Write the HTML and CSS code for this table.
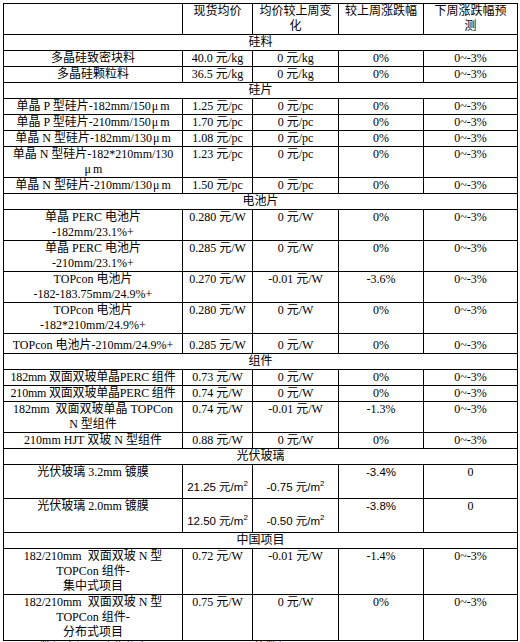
FILE: index.html
```html
<!DOCTYPE html>
<html lang="zh-CN">
<head>
<meta charset="utf-8">
<title>光伏产业链价格</title>
<link rel="stylesheet" href="styles.css">
</head>
<body>
<div class="cut-title">表1 光伏产业链主要产品价格周度变化</div>
<table class="price-table">
  <colgroup>
    <col class="c1"><col class="c2"><col class="c3"><col class="c4"><col class="c5">
  </colgroup>
  <tr class="r2">
    <td></td><td>现货均价</td><td>均价较上周变<br>化</td><td>较上周涨跌幅</td><td>下周涨跌幅预<br>测</td>
  </tr>
  <tr><td colspan="5" class="section">硅料</td></tr>
  <tr><td>多晶硅致密块料</td><td>40.0 元/kg</td><td>0 元/kg</td><td>0%</td><td>0~-3%</td></tr>
  <tr><td>多晶硅颗粒料</td><td>36.5 元/kg</td><td>0 元/kg</td><td>0%</td><td>0~-3%</td></tr>
  <tr><td colspan="5" class="section">硅片</td></tr>
  <tr><td>单晶 P 型硅片-182mm/150<span class="mu">μ</span>m</td><td>1.25 元/pc</td><td>0 元/pc</td><td>0%</td><td>0~-3%</td></tr>
  <tr><td>单晶 P 型硅片-210mm/150<span class="mu">μ</span>m</td><td>1.70 元/pc</td><td>0 元/pc</td><td>0%</td><td>0~-3%</td></tr>
  <tr><td>单晶 N 型硅片-182mm/130<span class="mu">μ</span>m</td><td>1.08 元/pc</td><td>0 元/pc</td><td>0%</td><td>0~-3%</td></tr>
  <tr><td>单晶 N 型硅片-182*210mm/130<br><span class="mu">μ</span>m</td><td>1.23 元/pc</td><td>0 元/pc</td><td>0%</td><td>0~-3%</td></tr>
  <tr><td>单晶 N 型硅片-210mm/130<span class="mu">μ</span>m</td><td>1.50 元/pc</td><td>0 元/pc</td><td>0%</td><td>0~-3%</td></tr>
  <tr><td colspan="5" class="section">电池片</td></tr>
  <tr><td>单晶 PERC 电池片<br>-182mm/23.1%+</td><td>0.280 元/W</td><td>0 元/W</td><td>0%</td><td>0~-3%</td></tr>
  <tr><td>单晶 PERC 电池片<br>-210mm/23.1%+</td><td>0.285 元/W</td><td>0 元/W</td><td>0%</td><td>0~-3%</td></tr>
  <tr><td>TOPcon 电池片<br>-182-183.75mm/24.9%+</td><td>0.270 元/W</td><td>-0.01 元/W</td><td>-3.6%</td><td>0~-3%</td></tr>
  <tr><td>TOPcon 电池片<br>-182*210mm/24.9%+</td><td>0.280 元/W</td><td>0 元/W</td><td>0%</td><td>0~-3%</td></tr>
  <tr class="tall"><td>TOPcon 电池片-210mm/24.9%+</td><td>0.285 元/W</td><td>0 元/W</td><td>0%</td><td>0~-3%</td></tr>
  <tr><td colspan="5" class="section">组件</td></tr>
  <tr><td class="tight">182mm 双面双玻单晶PERC 组件</td><td>0.73 元/W</td><td>0 元/W</td><td>0%</td><td>0~-3%</td></tr>
  <tr><td class="tight">210mm 双面双玻单晶PERC 组件</td><td>0.74 元/W</td><td>0 元/W</td><td>0%</td><td>0~-3%</td></tr>
  <tr><td>182mm&nbsp; 双面双玻单晶 TOPCon<br>N 型组件</td><td>0.74 元/W</td><td>-0.01 元/W</td><td>-1.3%</td><td>0~-3%</td></tr>
  <tr><td>210mm HJT 双玻 N 型组件</td><td>0.88 元/W</td><td>0 元/W</td><td>0%</td><td>0~-3%</td></tr>
  <tr><td colspan="5" class="section">光伏玻璃</td></tr>
  <tr class="glass"><td>光伏玻璃 3.2mm 镀膜</td><td class="low sans">21.25 元/m<sup>2</sup></td><td class="low sans">-0.75 元/m<sup>2</sup></td><td class="sans">-3.4%</td><td>0</td></tr>
  <tr class="glass"><td>光伏玻璃 2.0mm 镀膜</td><td class="low sans">12.50 元/m<sup>2</sup></td><td class="low sans">-0.50 元/m<sup>2</sup></td><td class="sans">-3.8%</td><td>0</td></tr>
  <tr><td colspan="5" class="section">中国项目</td></tr>
  <tr><td>182/210mm&nbsp; 双面双玻 N 型<br>TOPCon 组件-<br>集中式项目</td><td>0.72 元/W</td><td>-0.01 元/W</td><td>-1.4%</td><td>0~-3%</td></tr>
  <tr><td>182/210mm&nbsp; 双面双玻 N 型<br>TOPCon 组件-<br>分布式项目</td><td>0.75 元/W</td><td>0 元/W</td><td>0%</td><td>0~-3%</td></tr>
</table>
<div class="cut-note">数据来源：硅业分会　　　　InfoLink 价格数据</div>
</body>
</html>
```

FILE: styles.css
```css
html, body {
  margin: 0;
  padding: 0;
  background: #ffffff;
  color: #000000;
  font-family: "Liberation Serif", "Noto Sans CJK SC", serif;
  font-size: 12px;
}

body {
  overflow: hidden;
}

.cut-title {
  margin-top: -12px;
  padding-left: 145px;
  line-height: 15px;
  height: 15px;
  white-space: nowrap;
}

.price-table {
  margin-left: 3px;
  border-collapse: collapse;
  table-layout: fixed;
  width: 514px;
}

.c1 { width: 179px; }
.c2 { width: 70px; }
.c3 { width: 86px; }
.c4 { width: 85px; }
.c5 { width: 94px; }

.price-table td {
  border: 1px solid #000000;
  padding: 0 3px;
  line-height: 15px;
  text-align: center;
  vertical-align: top;
  white-space: nowrap;
  overflow: visible;
}

.price-table td.section {
  text-align: center;
}

.price-table td.tight {
  padding: 0 1px;
  letter-spacing: -0.2px;
}

.mu {
  padding: 0 2px 0 1px;
}

.tall td {
  height: 19px;
  vertical-align: bottom;
}

.glass td {
  height: 30px;
}

.price-table td.low {
  vertical-align: bottom;
  padding-bottom: 3px;
}

.sans {
  font-family: "Liberation Sans", "Noto Sans CJK SC", sans-serif;
  font-size: 11.5px;
}

.sans sup {
  font-size: 8px;
  line-height: 0;
  vertical-align: 5px;
}

.cut-note {
  padding-left: 40px;
  margin-top: 0;
  line-height: 15px;
  white-space: nowrap;
}
```
